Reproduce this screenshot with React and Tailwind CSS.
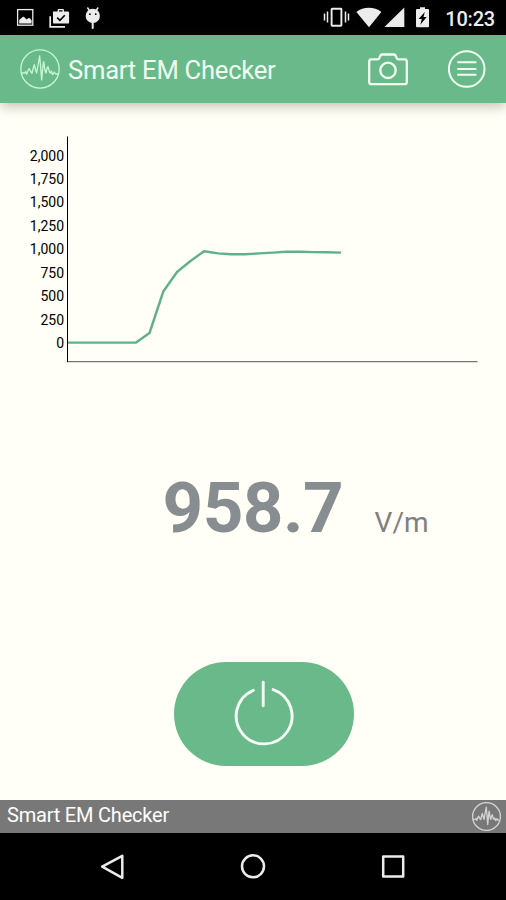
import React from 'react'

const readings = [
    [68, 342.6], [136, 342.6], [149.5, 333], [163.3, 291.5], [177, 272], [190.5, 261], [204, 251.3],
    [218, 253.4], [231, 254.3], [245, 254.3], [259, 253.4], [273, 252.6], [286, 251.8], [300, 251.8],
    [313, 252.1], [327, 252.2], [341, 252.6],
];

const ticks = ['2,000', '1,750', '1,500', '1,250', '1,000', '750', '500', '250', '0'];

const WaveLogo = ({ className, strokeWidth = 4 }) => (
    <svg className={className} viewBox="60 40 120 120" fill="none" stroke="currentColor" strokeWidth={strokeWidth} strokeLinejoin="round">
        <circle cx="120" cy="100" r="57.5" />
        <path d="M64 112h9l4-4 3 8 4-12 4-5 4 9 4 5 3-13 4-13 4 16 3 9 2-12 7-39 3 34 3 38 4-43 2-12 4 26 3 8 3-14 3-5 4 15 3 4 3-6 4 11 5-8 4 6h9" />
    </svg>
)

const StatusBar = () => (
    <div className='flex h-[35px] items-center justify-between bg-black text-[#ececec]'>
        <div className='flex h-full items-start'>
            <svg className='ml-4 mt-[8px] h-5 w-5' viewBox="0 0 20 20">
                <rect x="1.6" y="1.6" width="15.2" height="15.6" fill="none" stroke="currentColor" strokeWidth="1.3" />
                <path fill="currentColor" d="M3.2 15.5v-3.600l3.2-2.6c.8-.6 1.6-.6 2.2.1l2 2 1.6-1.1c.7-.5 1.3-.4 1.9.2l1.5 1.800v3.200z" />
            </svg>
            <svg className='ml-[12px] mt-[8px] h-[22px] w-[22px]' viewBox="0 0 22 22">
                <path d="M2.2 8.2v10.6h14.8" fill="none" stroke="currentColor" strokeWidth="1.7" />
                <path fill="currentColor" fillRule="evenodd" d="M5 3.6h4.6V2.3q0-1.3 1.3-1.3h3.8Q16 1 16 2.3v1.3h3.9q1.2 0 1.2 1.2v9.6q0 1.2-1.2 1.2H6.2Q5 15.600 5 14.400zM11 3.600h3.600V2.200h-3.600z" />
                <path d="M9.200 9.600l2.700 2.800 4.900-5.100" fill="none" stroke="#000" strokeWidth="1.600" />
            </svg>
            <svg className='ml-[14px] mt-[6px] h-6 w-[18px]' viewBox="0 0 18 24">
                <path d="M3.400 1.500l2 3M14.200 1.500l-2 3" stroke="currentColor" strokeWidth="1.500" />
                <ellipse cx="8.800" cy="9.900" rx="7.100" ry="7.200" fill="currentColor" />
                <path d="M8.700 16v6" stroke="currentColor" strokeWidth="2" strokeLinecap="round" />
                <circle cx="5.900" cy="8.200" r="0.900" fill="#000" />
                <circle cx="11.700" cy="8.200" r="0.900" fill="#000" />
            </svg>
        </div>
        <div className='flex h-full items-start'>
            <svg className='mt-[6px] h-[22px] w-[28px]' viewBox="0 0 28 22">
                <rect x="8.600" y="2.800" width="9.800" height="17" rx="0.500" fill="none" stroke="currentColor" strokeWidth="1.900" />
                <path d="M1.500 7.500v7M4.500 5.500v11M22.500 5.500v11M25.500 7.500v7" stroke="currentColor" strokeWidth="1.500" />
            </svg>
            <svg className='ml-[5px] mt-[7px] h-[21px] w-[26px]' viewBox="0 0 26 21">
                <path fill="currentColor" d="M.4 5C7.500-.6 18.200-.6 25.400 5L13 20.300z" />
            </svg>
            <svg className='ml-[2px] mt-[7px] h-[21px] w-[21px]' viewBox="0 0 21 21">
                <path fill="currentColor" d="M20.300.4v19.700H.4z" />
            </svg>
            <svg className='ml-[10px] mt-[7px] h-[21px] w-[16px]' viewBox="0 0 16 21">
                <path fill="currentColor" d="M2 2.100h3V.2h5v1.900h3q1 0 1 1v16.200q0 1-1 1H2q-1 0-1-1V3.100q0-1 1-1z" />
                <path fill="#000" d="M9.800 4.900L3.600 12h3.200l-1.500 5.800L11.700 10H8.500z" />
            </svg>
            <span className='ml-[14px] mr-[11px] mt-[5px] text-[20px] font-medium leading-[28px] tracking-[-0.2px]'>10:23</span>
        </div>
    </div>
)

const Header = () => (
    <div className='relative flex h-[67.500px] items-center bg-[#69b98b] text-[#f0fff0] shadow-[0_3px_12px_rgba(70,70,40,0.35)]'>
        <WaveLogo className='ml-5 h-10 w-10 text-[#c5f7d2]' />
        <h1 className='ml-[8px] pt-[2px] text-[25.600px] leading-8 tracking-[-0.25px]'>Smart EM Checker</h1>
        <button className='ml-auto mr-[39px]'>
            <svg className='h-[34px] w-[42px]' viewBox="0 0 42 34" fill="none" stroke="currentColor" strokeWidth="2.300" strokeLinejoin="round">
                <path d="M4.400 7.300h6.100q1.300 0 1.800-1.200l.8-1.900q.6-1.700 2.200-1.700h11.400q1.600 0 2.200 1.700l.8 1.900q.5 1.200 1.800 1.200h6.100q2.200 0 2.200 2.200v20.500q0 2.200-2.200 2.200H4.400q-2.200 0-2.200-2.200V9.500q0-2.200 2.200-2.200z" />
                <circle cx="21" cy="18.300" r="7.700" />
            </svg>
        </button>
        <button className='mr-5'>
            <svg className='h-[38px] w-[38px]' viewBox="0 0 38 38" fill="none" stroke="currentColor" strokeWidth="2" strokeLinecap="round">
                <circle cx="18.700" cy="19" r="17.800" />
                <path d="M10 12.300h17.600M10 19h17.600M10 24.800h17.600" />
            </svg>
        </button>
    </div>
)

const Chart = () => (
    <div className='flex h-[260px] pt-[33.500px]'>
        <div className='flex w-[64px] flex-col pt-[8.500px] text-right text-[14px] text-black'>
            {ticks.map((tick) => (
                <div key={tick} className='h-[23.450px] leading-[23.450px]'>{tick}</div>
            ))}
        </div>
        <svg className='ml-[2px] h-[227px] w-[412px]' viewBox="66 136 412 227" fill="none">
            <path d="M67 361.700H477.500" stroke="#777" strokeWidth="1.300" />
            <path d="M67.500 136.500V362" stroke="#000" strokeWidth="1" />
            <polyline points={readings.map((p) => p.join(',')).join(' ')} stroke="#60b286" strokeWidth="2.400" strokeLinejoin="round" />
        </svg>
    </div>
)

export default function App() {
    return (
        <div className='flex h-[900px] w-[506px] flex-col overflow-hidden bg-[#fffff7] font-[Roboto,sans-serif]'>
            <StatusBar />
            <Header />
            <main className='flex flex-1 flex-col'>
                <Chart />
                <div className='mt-[103.500px] flex h-[84px] items-baseline pl-[162.500px]'>
                    <span className='text-[71px] font-bold leading-[84px] tracking-[-0.6px] text-[#878d91]'>958.7</span>
                    <span className='ml-[31.500px] text-[28px] text-[#808080]'>V/m</span>
                </div>
                <button className='ml-[174px] mt-[112px] flex h-[104px] w-[179.500px] items-center justify-center rounded-full bg-[#69b98b]'>
                    <svg className='h-[68px] w-[62px]' viewBox="0 0 62 68" fill="none" stroke="#f5fff5" strokeWidth="2.900" strokeLinecap="round">
                        <path d="M20.300 10.300A27.900 27.900 0 1 0 40.100 9.600" />
                        <path d="M30.200 2.200v23.500" />
                    </svg>
                </button>
            </main>
            <footer className='flex h-[33px] items-center justify-between bg-[#787878] pl-[7px] pr-[5px] text-white'>
                <span className='pb-[4px] text-[20px] leading-6 tracking-[-0.2px]'>Smart EM Checker</span>
                <WaveLogo className='h-[29px] w-[29px] text-[#d2d2d2]' strokeWidth={5.500} />
            </footer>
            <nav className='flex h-[67px] items-center justify-between bg-black pl-[99px] pr-[99px] text-[#ececec]'>
                <svg className='h-7 w-7' viewBox="0 0 28 28" fill="none" stroke="currentColor" strokeWidth="2.500" strokeLinejoin="round">
                    <path d="M23.300 2.800v22L3.200 13.700z" />
                </svg>
                <svg className='h-7 w-7' viewBox="0 0 28 28" fill="none" stroke="currentColor" strokeWidth="2.500">
                    <circle cx="14" cy="13.300" r="11" />
                </svg>
                <svg className='h-7 w-7' viewBox="0 0 28 28" fill="none" stroke="currentColor" strokeWidth="2.500" strokeLinejoin="round">
                    <rect x="4.200" y="3.500" width="20" height="20" />
                </svg>
            </nav>
        </div>
    )
}
